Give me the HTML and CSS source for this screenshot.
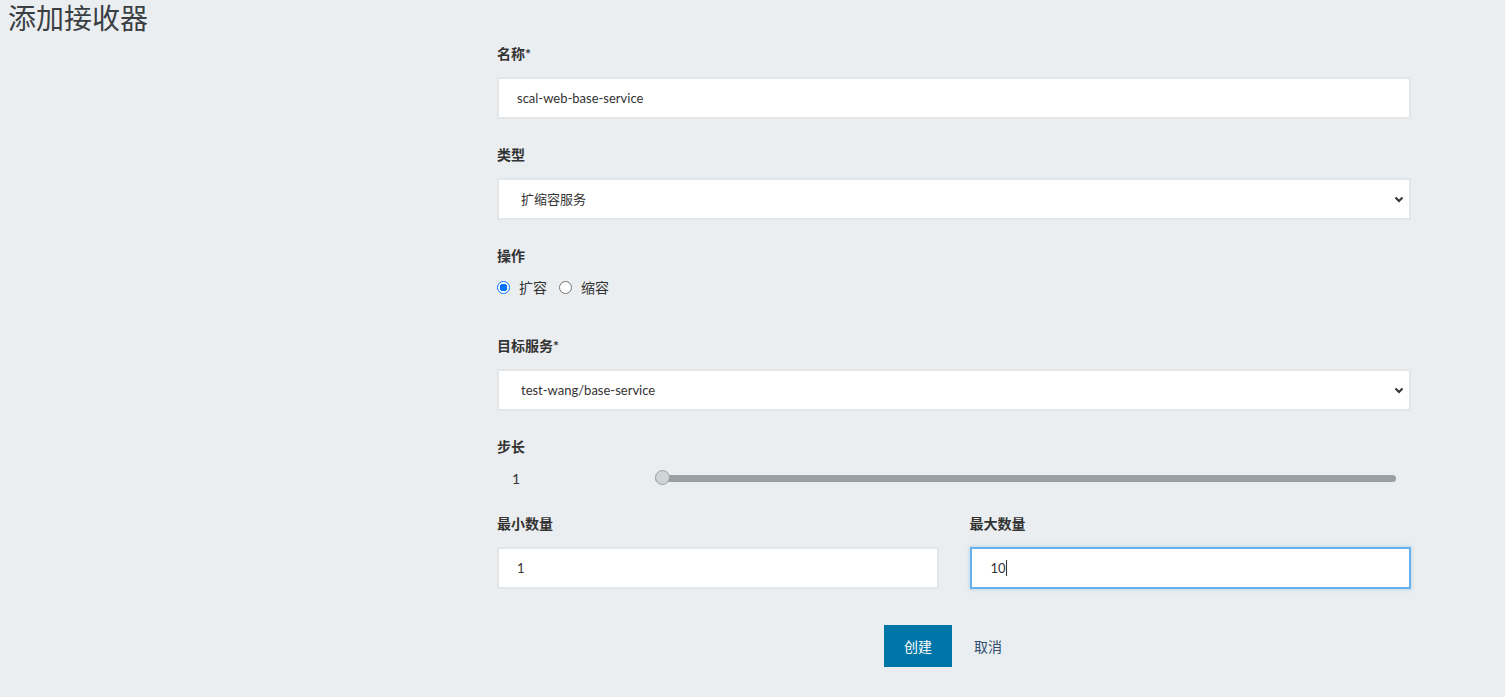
FILE: index.html
```html
<!DOCTYPE html>
<html lang="zh">
<head>
<meta charset="utf-8">
<title>添加接收器</title>
<link rel="stylesheet" href="styles.css">
</head>
<body>
<div class="page">
  <h1 class="title">添加接收器</h1>
  <form class="form">
    <div class="field">
      <label class="label">名称*</label>
      <input class="input" type="text" value="scal-web-base-service">
    </div>
    <div class="field">
      <label class="label">类型</label>
      <div class="select">
        <span class="select-text">扩缩容服务</span>
        <svg class="chev" width="10" height="7" viewBox="0 0 10 7"><path d="M1.5 1.5 L5 5 L8.5 1.5" fill="none" stroke="#333" stroke-width="2"/></svg>
      </div>
    </div>
    <div class="field">
      <label class="label">操作</label>
      <div class="radios">
        <span class="radio checked"></span><span class="radio-text">扩容</span>
        <span class="radio"></span><span class="radio-text">缩容</span>
      </div>
    </div>
    <div class="field">
      <label class="label">目标服务*</label>
      <div class="select">
        <span class="select-text">test-wang/base-service</span>
        <svg class="chev" width="10" height="7" viewBox="0 0 10 7"><path d="M1.5 1.5 L5 5 L8.5 1.5" fill="none" stroke="#333" stroke-width="2"/></svg>
      </div>
    </div>
    <div class="field">
      <label class="label">步长</label>
      <div class="slider-row">
        <span class="slider-value">1</span>
        <div class="slider">
          <div class="track"></div>
          <span class="thumb"></span>
        </div>
      </div>
    </div>
    <div class="row2">
      <div class="field col">
        <label class="label">最小数量</label>
        <div class="input">1</div>
      </div>
      <div class="field col">
        <label class="label">最大数量</label>
        <div class="input focus">10<span class="caret"></span></div>
      </div>
    </div>
    <div class="actions">
      <button type="button" class="btn-primary">创建</button>
      <button type="button" class="btn-link">取消</button>
    </div>
  </form>
</div>
</body>
</html>
```

FILE: styles.css
```css
html, body {
  margin: 0;
  padding: 0;
  background: #ebeef0;
  font-family: Lato, "Noto Sans CJK SC", sans-serif;
  color: #333;
}
.page {
  width: 1505px;
  height: 697px;
  overflow: hidden;
  position: relative;
}
.title {
  margin: 0;
  padding: 0 0 0 8px;
  font-size: 28px;
  font-weight: 400;
  line-height: 36px;
  color: #3a3f44;
}
.form {
  margin-left: 497px;
  width: 914px;
  margin-top: 8px;
}
.field {
  display: flex;
  flex-direction: column;
}
.label {
  font-size: 14px;
  font-weight: 700;
  line-height: 20px;
  color: #333;
  margin-bottom: 13px;
}
.input, .select {
  box-sizing: border-box;
  height: 42px;
  background: #fff;
  border: 2px solid #e3e6e8;
  font-size: 13px;
  line-height: 38px;
  padding: 0 18px;
  color: #333;
  font-family: Lato, "Noto Sans CJK SC", sans-serif;
  outline: none;
  margin-bottom: 26px;
}
input.input {
  width: 100%;
}
.select {
  display: flex;
  align-items: center;
  justify-content: space-between;
  padding: 0 5px 0 22px;
}
.chev {
  display: block;
}
.radios {
  display: flex;
  align-items: center;
  height: 22px;
  font-size: 14px;
  margin-top: -3px;
  margin-bottom: 38px;
}
.radio {
  box-sizing: border-box;
  width: 13px;
  height: 13px;
  border-radius: 50%;
  border: 1px solid #767676;
  background: #fff;
  margin-right: 9px;
}
.radio.checked {
  border: 1px solid #0075ff;
  background: radial-gradient(circle, #0075ff 0 3.6px, #fff 4px);
}
.radio-text {
  margin-right: 12px;
}
.slider-row {
  display: flex;
  align-items: center;
  height: 22px;
  margin-top: -3px;
  margin-bottom: 25px;
}
.slider-value {
  width: 158px;
  padding-left: 15px;
  box-sizing: border-box;
  font-size: 14px;
}
.slider {
  position: relative;
  width: 741px;
  height: 16px;
  display: flex;
  align-items: center;
}
.track {
  width: 100%;
  height: 7px;
  border-radius: 4px;
  background: #98a0a4;
}
.thumb {
  position: absolute;
  left: 0;
  top: 0;
  box-sizing: border-box;
  width: 15px;
  height: 15px;
  border-radius: 50%;
  background: #cfd4d7;
  border: 1px solid #99a1a5;
}
.row2 {
  display: flex;
  gap: 31px;
}
.col {
  flex: 1;
}
.row2 .input {
  padding-left: 18px;
  margin-bottom: 36px;
}
.input.focus {
  border-color: #66b0ee;
  box-shadow: 0 0 4px rgba(102, 176, 238, 0.5);
  padding-left: 19px;
}
.caret {
  display: inline-block;
  width: 1px;
  height: 16px;
  background: #333;
  vertical-align: -3px;
}
.actions {
  display: flex;
  justify-content: center;
  align-items: center;
  gap: 8px;
  padding-right: 8px;
}
.btn-primary {
  height: 42px;
  width: 68px;
  border: none;
  background: #0076a8;
  color: #fff;
  font-size: 14px;
  font-family: Lato, "Noto Sans CJK SC", sans-serif;
  font-weight: 400;
}
.btn-link {
  height: 42px;
  border: none;
  background: transparent;
  color: #2f4e6e;
  font-size: 14px;
  font-family: Lato, "Noto Sans CJK SC", sans-serif;
  padding: 0 14px;
}
```
